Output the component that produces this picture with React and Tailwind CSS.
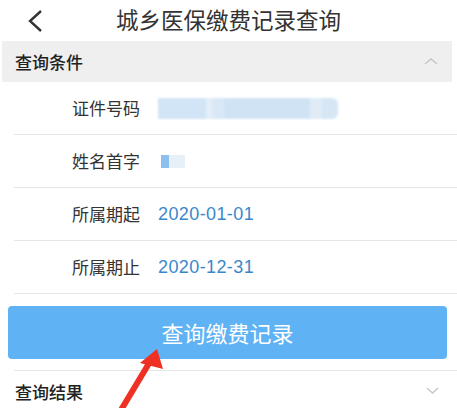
export default function App() {
  const cjk = { fontFamily: '"Noto Sans CJK SC", "Noto Sans", sans-serif' };
  const latin = { fontFamily: '"Liberation Sans", Arial, sans-serif' };
  const Row = ({ label, children }) => (
    <div className="ml-[14px] h-[53px] border-b border-[#e6e6e6] flex items-center">
      <div className="pl-[58px] w-[144px] text-[17px] text-[#333]" style={cjk}>{label}</div>
      <div className="flex items-center">{children}</div>
    </div>
  );
  return (
    <div className="w-[457px] h-[408px] overflow-hidden bg-white relative" style={cjk}>
      {/* header */}
      <div className="h-[41px] grid grid-cols-[1fr_auto_1fr] items-center">
        <div className="pl-[27px] flex items-center">
          <svg width="16" height="22" viewBox="0 0 16 22">
            <polyline points="14,1 3,11 14,21" fill="none" stroke="#333" strokeWidth="2.4" />
          </svg>
        </div>
        <div className="text-[22.5px] leading-none text-[#333] pb-[2px]">城乡医保缴费记录查询</div>
        <div />
      </div>
      {/* section header */}
      <div className="ml-[2px] mr-[5px] h-[41px] bg-[#efefef] flex items-center justify-between pl-[13px] pr-[14px]">
        <span className="text-[17px] font-medium text-[#222]">查询条件</span>
        <svg width="14" height="7" viewBox="0 0 14 7">
          <polyline points="1,6 7,1 13,6" fill="none" stroke="#c6c6c6" strokeWidth="1.4" />
        </svg>
      </div>
      <Row label="证件号码">
        <div className="flex h-[21px] w-[184px] blur-[1.2px]">
          <div className="w-[48px] bg-[#d2e5f6]" />
          <div className="w-[6px] bg-[#e4eef8]" />
          <div className="w-[12px] bg-[#d9e8f6]" />
          <div className="w-[86px] bg-[#d0e3f5]" />
          <div className="w-[12px] bg-[#e0ebf6]" />
          <div className="w-[16px] bg-[#d6e6f5] rounded-r-[6px]" />
        </div>
      </Row>
      <Row label="姓名首字">
        <div className="flex h-[13px] ml-[3px] blur-[0.6px]">
          <div className="w-[8px] bg-[#8ec0ee]" />
          <div className="w-[16px] bg-[#e6f0f9]" />
        </div>
      </Row>
      <Row label="所属期起">
        <span className="text-[18px] tracking-[0.4px] text-[#3a88cc]" style={latin}>2020-01-01</span>
      </Row>
      <Row label="所属期止">
        <span className="text-[18px] tracking-[0.4px] text-[#3a88cc]" style={latin}>2020-12-31</span>
      </Row>
      {/* button */}
      <div className="pt-[12px] px-[8px] pr-[10px]">
        <div className="h-[53px] rounded-[4px] bg-[#5fb3f4] flex items-center justify-center text-white text-[22px]">
          查询缴费记录
        </div>
      </div>
      <div className="ml-[14px] mt-[11px] border-t border-[#e6e6e6] h-[40px] flex items-center justify-between pl-[1px] pr-[18px]">
        <span className="text-[17px] font-medium text-[#222] pt-[2px]">查询结果</span>
        <svg width="13" height="7" viewBox="0 0 13 7">
          <polyline points="1,1 6.5,6 12,1" fill="none" stroke="#c6c6c6" strokeWidth="1.4" />
        </svg>
      </div>
      {/* red arrow overlay */}
      <svg className="absolute left-0 top-0 pointer-events-none" width="457" height="408" viewBox="0 0 457 408">
        <line x1="121" y1="410" x2="151" y2="360" stroke="#ee3124" strokeWidth="6" />
        <polygon points="157,349 140,363 163,369" fill="#ee3124" />
      </svg>
    </div>
  );
}
